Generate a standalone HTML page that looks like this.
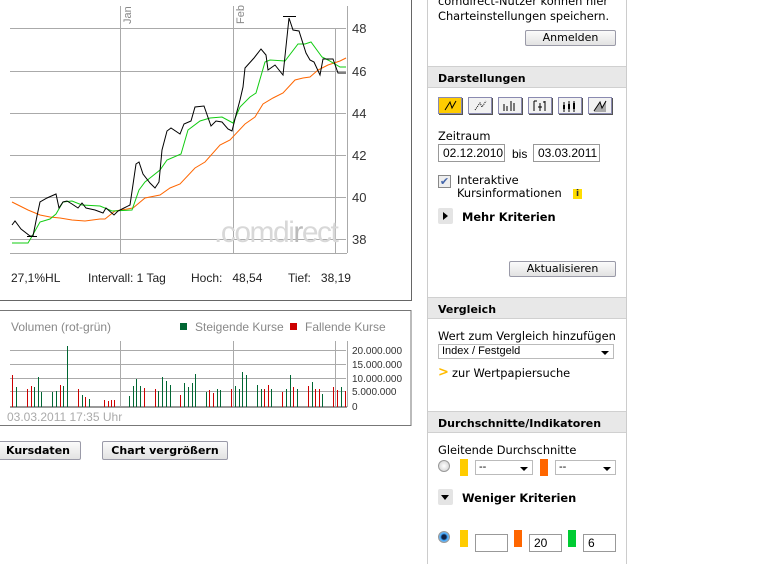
<!DOCTYPE html>
<html><head><meta charset="utf-8"><style>
*{margin:0;padding:0;box-sizing:border-box}
body{width:768px;height:564px;overflow:hidden;background:#fff;font-family:Tahoma,"DejaVu Sans","Liberation Sans",sans-serif;font-size:11.4px;color:#000;position:relative}
.a{position:absolute}
.btn{position:absolute;height:16px;border:1px solid #9a9aa8;background:linear-gradient(#fbfbfb,#e2e2e2);font-size:11px;text-align:center;line-height:14px;border-radius:2px}
.hd{position:absolute;left:428px;width:198px;height:22px;background:#e8e8e8;border-top:1px solid #d0d0d0;border-bottom:1px solid #d0d0d0;font-weight:bold;font-size:11px;padding:5px 0 0 10px}
.inp{position:absolute;height:18px;border:1px solid #999;background:#fff;font-family:"Liberation Sans",sans-serif;font-size:12px;padding:1px 4px}
.sel{position:absolute;height:15px;border:1px solid #bbb;background:#fff;font-family:"Liberation Sans",sans-serif;font-size:11px;padding:0 3px;line-height:13px}
.sel:after{content:"";position:absolute;right:4px;top:6px;border:4px solid transparent;border-top:4px solid #000;border-bottom:0}
.sw{position:absolute;width:8px;height:17px}
.tb{position:absolute;width:24px;height:17px;border:1px solid #8a8ab0;background:#f2f2f2;box-shadow:1px 1px 0 #555}
</style></head><body>
<svg class="a" style="left:0;top:0" width="420" height="470" font-family="Liberation Sans,sans-serif">
<g stroke="#aaa" stroke-width="1">
<line x1="10" y1="28.5" x2="346" y2="28.5"/><line x1="10" y1="71.5" x2="346" y2="71.5"/><line x1="10" y1="113.5" x2="346" y2="113.5"/><line x1="10" y1="155.5" x2="346" y2="155.5"/><line x1="10" y1="197.5" x2="346" y2="197.5"/><line x1="10" y1="239.5" x2="346" y2="239.5"/><line x1="10" y1="253.5" x2="347" y2="253.5"/>
<line x1="120.5" y1="6" x2="120.5" y2="253"/><line x1="233.5" y1="6" x2="233.5" y2="253"/><line x1="335.5" y1="28" x2="335.5" y2="253"/><line x1="347.5" y1="6" x2="347.5" y2="253"/>
</g>
<text x="131" y="24" transform="rotate(-90 131 24)" font-size="11" fill="#888">Jan</text>
<text x="244" y="24" transform="rotate(-90 244 24)" font-size="11" fill="#888">Feb</text>
<g font-size="13" fill="#333"><text x="352" y="33">48</text><text x="352" y="76">46</text><text x="352" y="118">44</text><text x="352" y="160">42</text><text x="352" y="202">40</text><text x="352" y="244">38</text></g>
<text x="214" y="242" font-size="30" fill="#d8d8d8" letter-spacing="-1.5">.comdi<tspan fill="#bbb">r</tspan>ect</text>
<polyline fill="none" stroke="#f60" stroke-width="1" points="12,202 20,206 28,210 40,215 50,217 60,218 72,220 85,221 100,219 105,219 115,211 133,208 145,198 160,195 170,188 180,184 195,168 205,162 220,145 230,140 245,124 255,117 263,104 273,98 283,93 295,80 303,78 310,77 318,70 328,65 340,61 346,58"/>
<polyline fill="none" stroke="#1c1" stroke-width="1" points="12,243 28,243 31,238 40,222 50,219 56,214 63,202 72,201 82,205 100,206 112,211 132,210 139,190 145,182 150,178 160,170 167,160 181,154 188,130 200,121 210,118 222,117 233,123 240,107 250,97 256,93 265,62 270,60 285,61 298,44 305,44 311,42 322,57 328,60 340,67 346,67"/>
<polyline fill="none" stroke="#000" stroke-width="1" points="12,225 15,221 21,229 30,236 33,236 37,216 40,202 47,198 56,194 59,208 63,202 67,201 72,204 78,208 82,203 86,208 95,210 103,213 106,208 114,215 118,211 124,208 130,205 136,164 139,162 143,174 150,183 155,188 159,182 162,150 167,131 171,128 180,134 184,124 191,121 195,107 204,106 211,126 216,121 222,122 228,129 232,131 236,115 240,100 243,87 245,68 254,58 261,49 266,55 268,70 275,65 283,75 289,18 293,30 299,31 306,53 310,60 314,62 320,75 323,59 333,59 338,73 346,73"/>
<line x1="283" y1="16.5" x2="296" y2="16.5" stroke="#000"/><line x1="27" y1="236.5" x2="37" y2="236.5" stroke="#000"/>
<g font-size="12" fill="#222"><text x="11" y="282">27,1%HL</text><text x="88" y="282">Intervall: 1 Tag</text><text x="191" y="282">Hoch:&#160;&#160;&#160;48,54</text><text x="288" y="282">Tief:&#160;&#160;&#160;38,19</text></g>
<line x1="411.5" y1="0" x2="411.5" y2="300" stroke="#666"/>
<line x1="0" y1="300.5" x2="412" y2="300.5" stroke="#666"/>
<rect x="-2" y="310.5" width="413" height="115" fill="none" stroke="#777"/>
<text x="11" y="331" font-size="12" fill="#888">Volumen (rot-grün)</text>
<rect x="180" y="323" width="7" height="7" fill="#063"/><text x="195" y="331" font-size="12" fill="#888">Steigende Kurse</text>
<rect x="290" y="323" width="7" height="7" fill="#c00"/><text x="305" y="331" font-size="12" fill="#888">Fallende Kurse</text>
<g stroke="#aaa"><line x1="10" y1="350.5" x2="346" y2="350.5"/><line x1="10" y1="364.5" x2="346" y2="364.5"/><line x1="10" y1="378.5" x2="346" y2="378.5"/><line x1="10" y1="391.5" x2="346" y2="391.5"/><line x1="120.5" y1="341" x2="120.5" y2="407"/><line x1="233.5" y1="341" x2="233.5" y2="407"/><line x1="335.5" y1="341" x2="335.5" y2="407"/><line x1="347.5" y1="341" x2="347.5" y2="407"/></g>
<line x1="10" y1="407" x2="347" y2="407" stroke="#999" stroke-width="2"/>
<g font-size="10" fill="#333"><text x="352" y="354">20.000.000</text><text x="352" y="368">15.000.000</text><text x="352" y="382">10.000.000</text><text x="352" y="395">5.000.000</text><text x="352" y="410">0</text></g>
<g stroke="#c00"><line x1="12.5" y1="375" x2="12.5" y2="407"/><line x1="27.5" y1="389" x2="27.5" y2="407"/><line x1="31.5" y1="386" x2="31.5" y2="407"/><line x1="60.5" y1="385" x2="60.5" y2="407"/><line x1="78.5" y1="389" x2="78.5" y2="407"/><line x1="85.5" y1="397" x2="85.5" y2="407"/><line x1="104.5" y1="400" x2="104.5" y2="407"/><line x1="108.5" y1="401" x2="108.5" y2="407"/><line x1="111.5" y1="400" x2="111.5" y2="407"/><line x1="114.5" y1="400" x2="114.5" y2="407"/><line x1="144.5" y1="388" x2="144.5" y2="407"/><line x1="155.5" y1="389" x2="155.5" y2="407"/><line x1="180.5" y1="395" x2="180.5" y2="407"/><line x1="209.5" y1="390" x2="209.5" y2="407"/><line x1="213.5" y1="393" x2="213.5" y2="407"/><line x1="231.5" y1="389" x2="231.5" y2="407"/><line x1="264.5" y1="389" x2="264.5" y2="407"/><line x1="268.5" y1="385" x2="268.5" y2="407"/><line x1="282.5" y1="392" x2="282.5" y2="407"/><line x1="293.5" y1="387" x2="293.5" y2="407"/><line x1="308.5" y1="386" x2="308.5" y2="407"/><line x1="315.5" y1="389" x2="315.5" y2="407"/><line x1="319.5" y1="389" x2="319.5" y2="407"/><line x1="333.5" y1="387" x2="333.5" y2="407"/><line x1="337.5" y1="390" x2="337.5" y2="407"/><line x1="345.5" y1="391" x2="345.5" y2="407"/></g>
<g stroke="#063"><line x1="16.5" y1="387" x2="16.5" y2="407"/><line x1="34.5" y1="387" x2="34.5" y2="407"/><line x1="38.5" y1="377" x2="38.5" y2="407"/><line x1="41.5" y1="392" x2="41.5" y2="407"/><line x1="52.5" y1="392" x2="52.5" y2="407"/><line x1="56.5" y1="391" x2="56.5" y2="407"/><line x1="63.5" y1="386" x2="63.5" y2="407"/><line x1="67.5" y1="346" x2="67.5" y2="407"/><line x1="82.5" y1="395" x2="82.5" y2="407"/><line x1="89.5" y1="399" x2="89.5" y2="407"/><line x1="129.5" y1="396" x2="129.5" y2="407"/><line x1="133.5" y1="386" x2="133.5" y2="407"/><line x1="136.5" y1="379" x2="136.5" y2="407"/><line x1="140.5" y1="386" x2="140.5" y2="407"/><line x1="158.5" y1="391" x2="158.5" y2="407"/><line x1="162.5" y1="377" x2="162.5" y2="407"/><line x1="166.5" y1="381" x2="166.5" y2="407"/><line x1="170.5" y1="385" x2="170.5" y2="407"/><line x1="184.5" y1="383" x2="184.5" y2="407"/><line x1="188.5" y1="387" x2="188.5" y2="407"/><line x1="192.5" y1="383" x2="192.5" y2="407"/><line x1="195.5" y1="374" x2="195.5" y2="407"/><line x1="206.5" y1="392" x2="206.5" y2="407"/><line x1="217.5" y1="389" x2="217.5" y2="407"/><line x1="220.5" y1="390" x2="220.5" y2="407"/><line x1="235.5" y1="386" x2="235.5" y2="407"/><line x1="239.5" y1="389" x2="239.5" y2="407"/><line x1="242.5" y1="372" x2="242.5" y2="407"/><line x1="246.5" y1="375" x2="246.5" y2="407"/><line x1="257.5" y1="385" x2="257.5" y2="407"/><line x1="261.5" y1="389" x2="261.5" y2="407"/><line x1="271.5" y1="389" x2="271.5" y2="407"/><line x1="286.5" y1="389" x2="286.5" y2="407"/><line x1="290.5" y1="375" x2="290.5" y2="407"/><line x1="297.5" y1="389" x2="297.5" y2="407"/><line x1="312.5" y1="382" x2="312.5" y2="407"/><line x1="322.5" y1="394" x2="322.5" y2="407"/><line x1="341.5" y1="387" x2="341.5" y2="407"/></g>
<text x="7" y="421" font-size="12" fill="#aaa">03.03.2011 17:35 Uhr</text>
</svg>
<div class="btn" style="left:-5px;top:441px;width:86px;height:19px;font-weight:bold;line-height:17px">Kursdaten</div>
<div class="btn" style="left:102px;top:441px;width:126px;height:19px;font-weight:bold;line-height:17px">Chart vergrößern</div>

<div class="a" style="left:427px;top:0;width:1px;height:564px;background:#ccc"></div>
<div class="a" style="left:626px;top:0;width:1px;height:564px;background:#ccc"></div>
<div class="a" style="left:438px;top:-6px;line-height:15px">comdirect-Nutzer können hier<br>Charteinstellungen speichern.</div>
<div class="btn" style="left:525px;top:30px;width:91px">Anmelden</div>
<div class="hd" style="top:66px">Darstellungen</div>
<div class="tb" style="left:438px;top:97px;background:#fc0"><svg width="22" height="15"><path d="M6 12 L11 4 L13 10 L17 3" fill="none" stroke="#000"/></svg></div>
<div class="tb" style="left:468px;top:97px"><svg width="22" height="15"><path d="M6 12 L11 5 L13 9 L17 3" fill="none" stroke="#000" stroke-dasharray="1 1"/></svg></div>
<div class="tb" style="left:498px;top:97px"><svg width="22" height="15"><path d="M5 6v7M8 8v5M12 3v10M15 5v8" stroke="#000"/></svg></div>
<div class="tb" style="left:528px;top:97px"><svg width="22" height="15"><path d="M5 3v10M5 3h3M11 5v8M9 9h4M16 3v10M14 4h2" stroke="#000" fill="none"/></svg></div>
<div class="tb" style="left:558px;top:97px"><svg width="22" height="15"><path d="M5 4v10M10 3v11M15 3v11" stroke="#000"/><rect x="4" y="7" width="2" height="4"/><rect x="9" y="6" width="2" height="5"/><rect x="14" y="5" width="2" height="6"/></svg></div>
<div class="tb" style="left:588px;top:97px"><svg width="22" height="15"><path d="M5 14 L11 4 L13 10 L17 3 V14Z" fill="#aaa"/><path d="M5 13 L11 4 L13 10 L17 3" fill="none" stroke="#000"/></svg></div>
<div class="a" style="left:438px;top:129px">Zeitraum</div>
<div class="inp" style="left:438px;top:144px;width:67px">02.12.2010</div>
<div class="a" style="left:512px;top:147px;font-family:'Liberation Sans',sans-serif;font-size:12px">bis</div>
<div class="inp" style="left:533px;top:144px;width:67px">03.03.2011</div>
<div class="a" style="left:438px;top:175px;width:13px;height:13px;border:1px solid #888;background:#eee;font-size:11px;color:#46a;line-height:11px;text-align:center">✔</div>
<div class="a" style="left:457px;top:174px;line-height:13px">Interaktive<br>Kursinformationen</div>
<div class="a" style="left:573px;top:189px;width:9px;height:10px;background:#fd0;font-size:9px;font-weight:bold;text-align:center;line-height:10px;color:#333">i</div>
<div class="a" style="left:438px;top:208px;width:15px;height:16px;background:#e4e4e4;border-radius:2px"><div style="position:absolute;left:5px;top:4px;border:4px solid transparent;border-left:5px solid #000;border-right:0"></div></div>
<div class="a" style="left:462px;top:210px;font-weight:bold">Mehr Kriterien</div>
<div class="btn" style="left:509px;top:261px;width:107px">Aktualisieren</div>
<div class="hd" style="top:297px">Vergleich</div>
<div class="a" style="left:438px;top:329px">Wert zum Vergleich hinzufügen</div>
<div class="sel" style="left:438px;top:344px;width:176px">Index / Festgeld</div>
<div class="a" style="left:438px;top:365px;font-size:13px;color:#fb0;font-weight:bold">&gt;</div>
<div class="a" style="left:452px;top:366px">zur Wertpapiersuche</div>
<div class="hd" style="top:411px">Durchschnitte/Indikatoren</div>
<div class="a" style="left:438px;top:443px">Gleitende Durchschnitte</div>
<div class="a" style="left:438px;top:460px;width:12px;height:12px;border-radius:50%;border:1px solid #999;background:radial-gradient(#fff,#ccc)"></div>
<div class="sw" style="left:460px;top:459px;background:#fc0"></div>
<div class="sel" style="left:475px;top:460px;width:58px">--</div>
<div class="sw" style="left:540px;top:459px;background:#f60"></div>
<div class="sel" style="left:555px;top:460px;width:61px">--</div>
<div class="a" style="left:438px;top:489px;width:15px;height:16px;background:#e4e4e4;border-radius:2px"><div style="position:absolute;left:3px;top:6px;border:4px solid transparent;border-top:5px solid #000;border-bottom:0"></div></div>
<div class="a" style="left:462px;top:491px;font-weight:bold">Weniger Kriterien</div>
<div class="a" style="left:438px;top:531px;width:12px;height:12px;border-radius:50%;border:1px solid #999;background:radial-gradient(#124 30%,#4af 50%,#ccc)"></div>
<div class="sw" style="left:460px;top:530px;background:#fc0"></div>
<div class="inp" style="left:475px;top:534px;width:33px"></div>
<div class="sw" style="left:514px;top:530px;background:#f60"></div>
<div class="inp" style="left:529px;top:534px;width:33px">20</div>
<div class="sw" style="left:568px;top:530px;background:#0c3"></div>
<div class="inp" style="left:583px;top:534px;width:33px">6</div>
</body></html>
